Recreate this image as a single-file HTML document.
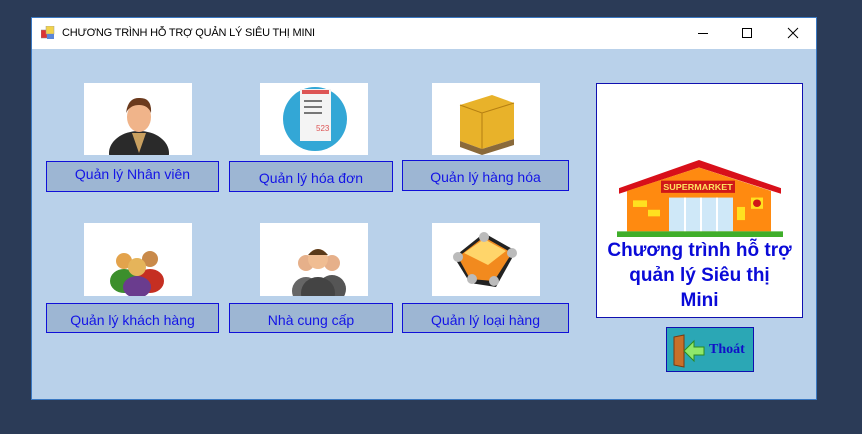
<!DOCTYPE html>
<html><head><meta charset="utf-8"><style>
*{margin:0;padding:0;box-sizing:border-box}
body{width:862px;height:434px;background:#2b3b57;position:relative;overflow:hidden;font-family:"Liberation Sans",Arial,sans-serif}
.win{position:absolute;left:31px;top:17px;width:786px;height:383px;background:#b9d1ea;border:1px solid #3a78c2}
.title{position:absolute;left:0;top:0;width:100%;height:31px;background:#fff}
.title span{position:absolute;left:30px;top:9px;font-size:11px;letter-spacing:-0.2px;color:#000}
.abs{position:absolute}
.img{position:absolute;background:#fff;overflow:hidden}
.btn{position:absolute;background:#9db6d3;border:1px solid #1010d8;color:#1414e6;font-size:14px;text-align:center}
</style></head><body>
<div class="win">
 <div class="title">
  <svg class="abs" style="left:9px;top:8px" width="14" height="14"><rect x="0" y="4" width="6" height="8" fill="#d33" stroke="#888" stroke-width=".5"/><rect x="5" y="0" width="8" height="8" fill="#f2d24a" stroke="#999" stroke-width=".5"/><rect x="6" y="8" width="7" height="5" fill="#5b86d9"/></svg>
  <span>CHƯƠNG TRÌNH HỖ TRỢ QUẢN LÝ SIÊU THỊ MINI</span>
  <svg class="abs" style="left:665px;top:9px" width="12" height="12"><line x1="1" y1="6.5" x2="11" y2="6.5" stroke="#000"/></svg>
  <svg class="abs" style="left:709px;top:9px" width="12" height="12"><rect x="1.5" y="1.5" width="9" height="9" fill="none" stroke="#000"/></svg>
  <svg class="abs" style="left:755px;top:9px" width="12" height="12"><path d="M1 1L11 11M11 1L1 11" stroke="#000"/></svg>
 </div>
</div>
<div class="img" style="left:84px;top:83px;width:108px;height:72px">
 <svg width="108" height="72"><ellipse cx="55" cy="70" rx="30" ry="22" fill="#2a2a2a"/><path d="M48 50 L55 70 L62 50Z" fill="#c9a060"/><ellipse cx="55" cy="34" rx="12" ry="15" fill="#f0b48a"/><path d="M42 30 Q44 14 56 15 Q68 15 67 30 Q64 22 55 22 Q46 22 42 30Z" fill="#6b3a1d"/></svg>
</div>
<div class="img" style="left:260px;top:83px;width:108px;height:72px">
 <svg width="108" height="72"><circle cx="55" cy="36" r="32" fill="#33a7d6"/><rect x="40" y="6" width="31" height="52" fill="#f4f4f4"/><rect x="42" y="7" width="27" height="4" fill="#d55"/><rect x="44" y="17" width="18" height="2" fill="#777"/><rect x="44" y="23" width="18" height="2" fill="#777"/><rect x="44" y="29" width="18" height="2" fill="#777"/><text x="56" y="48" font-size="8" fill="#d55" font-family="Liberation Sans">523</text></svg>
</div>
<div class="img" style="left:432px;top:83px;width:108px;height:72px">
 <svg width="108" height="72"><path d="M28 22 L60 12 L82 20 L82 56 L50 66 L28 58Z" fill="#e8b22a"/><path d="M28 22 L50 30 L82 20 M50 30 L50 66" stroke="#b57f12" fill="none"/><path d="M28 58 L50 66 L82 56 L82 62 L50 72 L28 64Z" fill="#8a6a3a"/></svg>
</div>
<div class="btn" style="left:46px;top:161px;width:173px;height:31px;line-height:24px">Quản lý Nhân viên</div>
<div class="btn" style="left:229px;top:161px;width:164px;height:31px;line-height:33px">Quản lý hóa đơn</div>
<div class="btn" style="left:402px;top:160px;width:167px;height:31px;line-height:32px">Quản lý hàng hóa</div>
<div class="img" style="left:84px;top:223px;width:108px;height:73px">
 <svg width="108" height="73"><ellipse cx="40" cy="58" rx="14" ry="12" fill="#3c8f2c"/><circle cx="40" cy="38" r="8" fill="#e3a34c"/><ellipse cx="66" cy="58" rx="14" ry="12" fill="#c52f22"/><circle cx="66" cy="36" r="8" fill="#c98a4a"/><ellipse cx="53" cy="64" rx="14" ry="11" fill="#6a3c8e"/><circle cx="53" cy="44" r="9" fill="#e5b45a"/></svg>
</div>
<div class="img" style="left:260px;top:223px;width:108px;height:73px">
 <svg width="108" height="73"><ellipse cx="72" cy="66" rx="14" ry="14" fill="#555"/><circle cx="72" cy="40" r="8" fill="#e6b08a"/><ellipse cx="46" cy="68" rx="14" ry="14" fill="#666"/><circle cx="46" cy="40" r="8" fill="#e6b08a"/><ellipse cx="58" cy="70" rx="17" ry="16" fill="#444"/><circle cx="58" cy="36" r="10" fill="#f0bd92"/><path d="M48 32 Q58 20 68 32" fill="#5a3a1a"/></svg>
</div>
<div class="img" style="left:432px;top:223px;width:108px;height:73px">
 <svg width="108" height="73"><path d="M22 34 L52 10 L84 28 L64 64 L38 60Z" fill="#222"/><path d="M26 34 L52 14 L80 30 L62 58 L38 56Z" fill="#f28a1e"/><path d="M32 30 L52 16 L74 28 L56 42Z" fill="#ffd56a"/><circle cx="26" cy="34" r="5" fill="#bbb"/><circle cx="52" cy="14" r="5" fill="#bbb"/><circle cx="80" cy="30" r="5" fill="#bbb"/><circle cx="62" cy="58" r="5" fill="#bbb"/><circle cx="40" cy="56" r="5" fill="#bbb"/></svg>
</div>
<div class="btn" style="left:46px;top:303px;width:173px;height:30px;line-height:32px">Quản lý khách hàng</div>
<div class="btn" style="left:229px;top:303px;width:164px;height:30px;line-height:32px">Nhà cung cấp</div>
<div class="btn" style="left:402px;top:303px;width:167px;height:30px;line-height:32px">Quản lý loại hàng</div>
<div class="img" style="left:596px;top:83px;width:207px;height:235px;border:1px solid #1010b0">
 <svg class="abs" style="left:20px;top:76px" width="166" height="77" viewBox="0 0 166 82" preserveAspectRatio="none"><path d="M2 30 L82 0 L164 30 L164 36 L82 8 L2 36Z" fill="#d8101a"/><path d="M10 33 L82 8 L154 33 L154 76 L10 76Z" fill="#ff8a10"/><rect x="44" y="22" width="74" height="13" fill="#d01818"/><text x="81" y="32" font-size="9" font-weight="bold" fill="#ffe060" text-anchor="middle" font-family="Liberation Sans">SUPERMARKET</text><rect x="52" y="40" width="64" height="36" fill="#cfe8f8"/><path d="M68 40V76M84 40V76M100 40V76" stroke="#fff" stroke-width="2"/><rect x="16" y="43" width="14" height="7" fill="#ffe020"/><rect x="31" y="53" width="12" height="7" fill="#ffe020"/><rect x="120" y="50" width="8" height="14" fill="#ffe020"/><rect x="134" y="40" width="12" height="12" fill="#ffe020"/><circle cx="140" cy="46" r="4" fill="#d01818"/><rect x="0" y="76" width="166" height="6" fill="#3fae2a"/></svg>
 <div class="abs" style="left:0;top:154px;width:205px;text-align:center;color:#0a0ad8;font-weight:bold;font-size:19px;line-height:25px">Chương trình hỗ trợ<br>quản lý Siêu thị<br>Mini</div>
</div>
<div class="abs" style="left:666px;top:327px;width:88px;height:45px;background:#2ba7b5;border:1px solid #1010b0">
 <svg class="abs" style="left:4px;top:5px" width="36" height="36"><path d="M3 4 L13 2 L13 34 L3 32Z" fill="#c8702a" stroke="#7a3a10"/><path d="M13 18 L23 8 L23 14 L33 14 L33 22 L23 22 L23 28Z" fill="#8fe86a" stroke="#2c8a20"/></svg>
 <div class="abs" style="left:42px;top:14px;font-family:'Liberation Serif',serif;font-weight:bold;font-size:14px;color:#1010c8">Thoát</div>
</div>
</body></html>
